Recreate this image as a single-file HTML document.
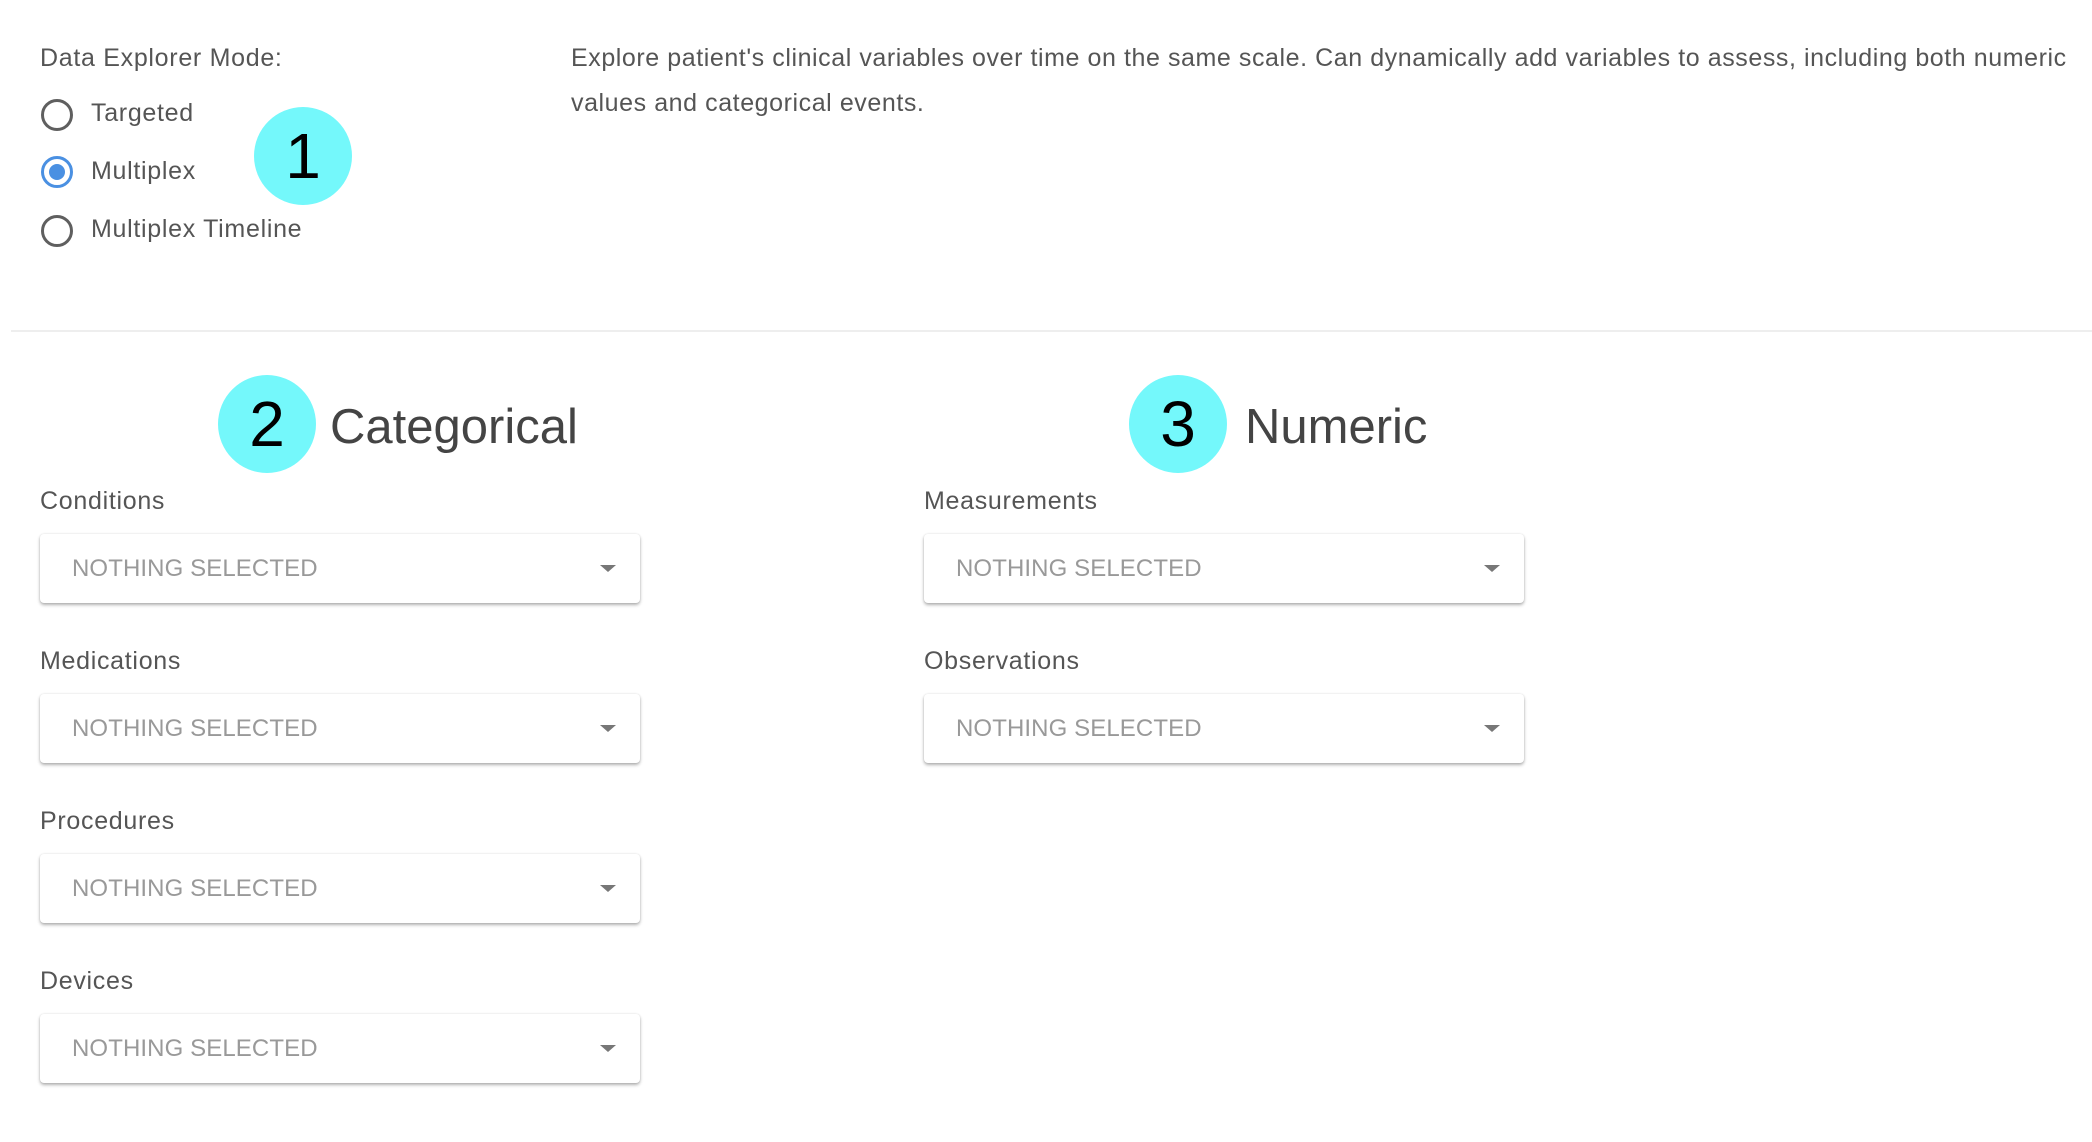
<!DOCTYPE html>
<html><head><meta charset="utf-8"><style>
body{margin:0;width:2092px;height:1142px;background:#fff;font-family:"Liberation Sans",sans-serif;color:#555;position:relative;overflow:hidden}
.a{position:absolute;white-space:nowrap}
.t{font-size:25px;letter-spacing:0.7px}
.d{letter-spacing:0.57px}
.radio{position:absolute;width:26px;height:26px;border:3px solid #5f5f5f;border-radius:50%}
.radio.on{border-color:#4a90e2}
.radio.on::after{content:"";position:absolute;left:5px;top:5px;width:16px;height:16px;border-radius:50%;background:#4a90e2}
.badge{position:absolute;width:98px;height:98px;border-radius:50%;background:#74f8fb;color:#000;font-size:64px;text-align:center;line-height:98px}
.dd{position:absolute;width:600px;height:69px;background:#fff;border-radius:4px;box-shadow:0 2px 3px rgba(0,0,0,.3),0 0 2px rgba(0,0,0,.1)}
.dd span{position:absolute;left:32px;top:21px;font-size:24px;color:#999;letter-spacing:0.1px}
.dd i{position:absolute;right:24px;top:31px;width:0;height:0;border-left:8px solid transparent;border-right:8px solid transparent;border-top:7px solid #777}
.h{font-size:49px;color:#444}
</style></head><body>
<div class="a t" style="left:40px;top:44px">Data Explorer Mode:</div>
<div class="radio" style="left:41px;top:99px"></div><div class="a t" style="left:91px;top:99px">Targeted</div>
<div class="radio on" style="left:41px;top:156px"></div><div class="a t" style="left:91px;top:157px">Multiplex</div>
<div class="radio" style="left:41px;top:215px"></div><div class="a t" style="left:91px;top:215px">Multiplex Timeline</div>
<div class="badge" style="left:254px;top:107px">1</div>
<div class="a t d" style="left:571px;top:44px">Explore patient's clinical variables over time on the same scale. Can dynamically add variables to assess, including both numeric</div>
<div class="a t d" style="left:571px;top:89px">values and categorical events.</div>
<div class="a" style="left:11px;right:0;top:330px;height:2px;background:#eee"></div>
<div class="badge" style="left:218px;top:375px">2</div>
<div class="a h" style="left:330px;top:399px">Categorical</div>
<div class="badge" style="left:1129px;top:375px">3</div>
<div class="a h" style="left:1245px;top:399px">Numeric</div>

<div class="a t" style="left:40px;top:487px">Conditions</div>
<div class="dd" style="left:40px;top:534px"><span>NOTHING SELECTED</span><i></i></div>
<div class="a t" style="left:40px;top:647px">Medications</div>
<div class="dd" style="left:40px;top:694px"><span>NOTHING SELECTED</span><i></i></div>
<div class="a t" style="left:40px;top:807px">Procedures</div>
<div class="dd" style="left:40px;top:854px"><span>NOTHING SELECTED</span><i></i></div>
<div class="a t" style="left:40px;top:967px">Devices</div>
<div class="dd" style="left:40px;top:1014px"><span>NOTHING SELECTED</span><i></i></div>

<div class="a t" style="left:924px;top:487px">Measurements</div>
<div class="dd" style="left:924px;top:534px"><span>NOTHING SELECTED</span><i></i></div>
<div class="a t" style="left:924px;top:647px">Observations</div>
<div class="dd" style="left:924px;top:694px"><span>NOTHING SELECTED</span><i></i></div>
</body></html>
